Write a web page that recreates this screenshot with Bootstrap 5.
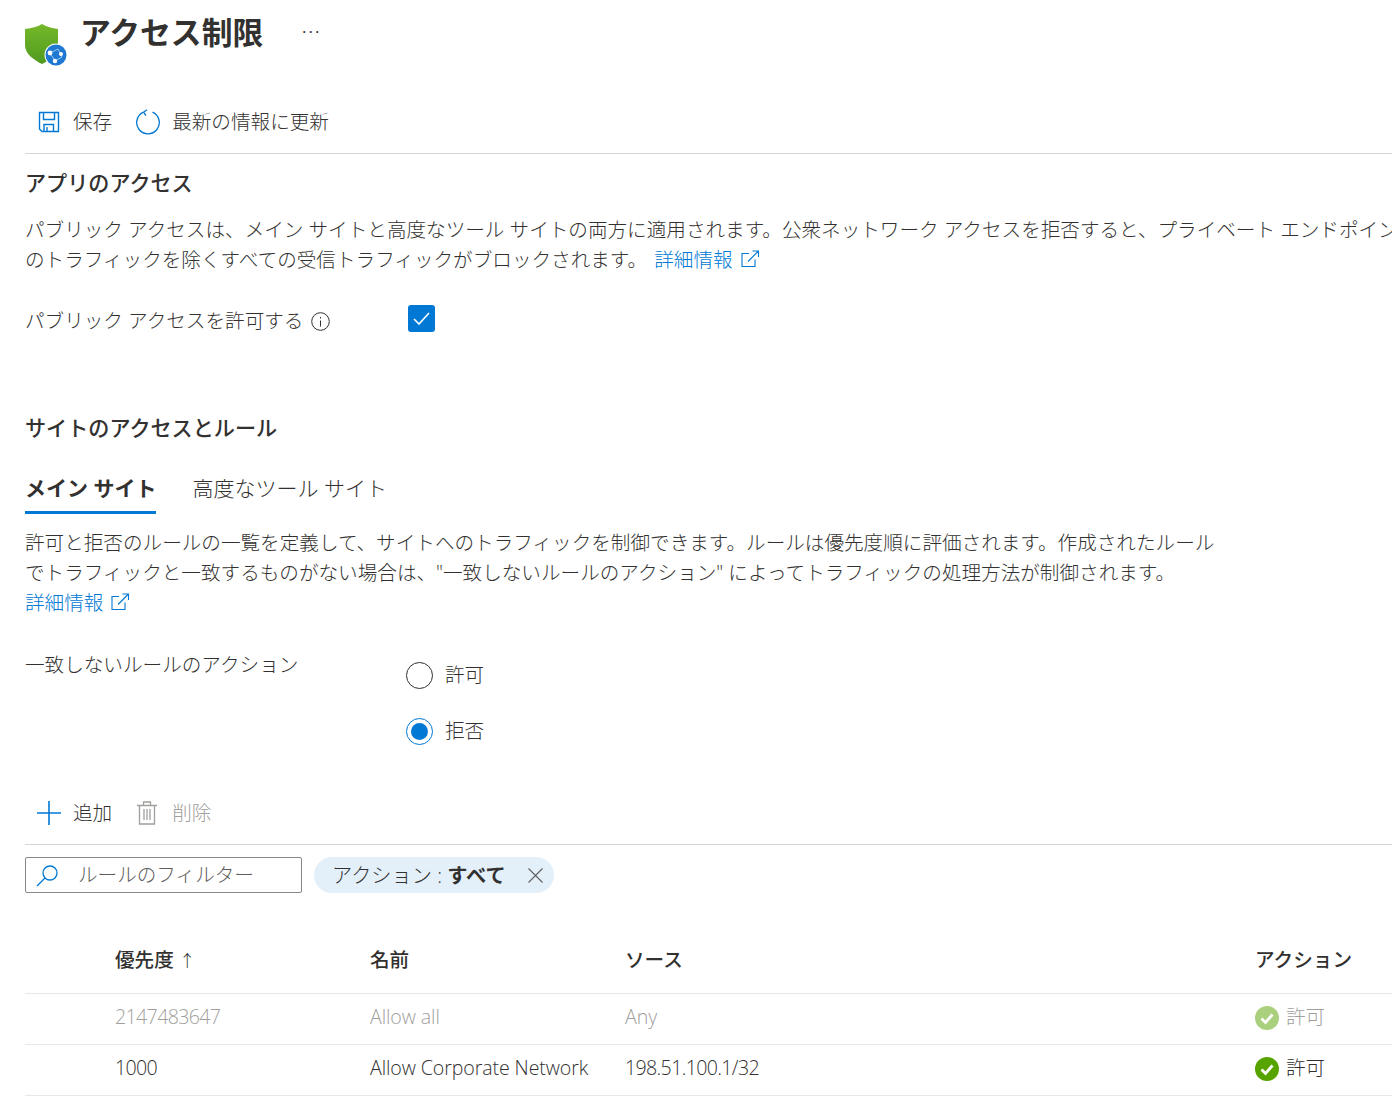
<!DOCTYPE html>
<html lang="ja">
<head>
  <meta charset="UTF-8">
  <title>アクセス制限</title>
  <meta name="viewport" content="width=device-width, initial-scale=1">
  <link href="https://cdn.jsdelivr.net/npm/bootstrap@5.3.3/dist/css/bootstrap.min.css" rel="stylesheet">
  <style>
    html, body { height: 1120px; overflow: hidden; }
    body {
      font-family: "Open Sans", "Noto Sans CJK JP", sans-serif;
      font-size: 19.6px; font-weight: 300; line-height: 30px; color: #323130; background: #fff;
    }
    a { color: #0078d4; text-decoration: none; }
    svg { display: block; flex: none; }
    .pg { padding-left: 25px; width: 1392px; }
    .head-row { height: 100px; }
    .shield-logo { margin-top: 24px; }
    .head-title { font-size: 30.8px; font-weight: 700; line-height: 40px; margin: 12px 0 0 11px; width: 222px; }
    .head-more { font-size: 17px; line-height: 20px; margin-top: 22px; letter-spacing: 2px; font-weight: 400; }
    .cmd-bar { height: 54px; border-bottom: 1px solid #d6d6d6; padding: 0 0 9px 13px; }
    .cmd-bar.add-bar { height: 63px; margin-top: 23px; padding: 0 0 0 12px; }
    .cmd-btn { gap: 12px; margin-right: 24px; }
    .cmd-btn.save-btn { gap: 13px; }
    .cmd-btn.add-btn { margin-right: 25px; }
    .muted-cmd { color: #a19f9d; }
    .muted-cmd svg { margin-right: 3px; }
    .sec-title { font-size: 21.1px; font-weight: 500; line-height: 30px; margin: 14px 0 0; }
    .sec-title.sec-gap { margin-top: 78px; }
    .body-txt { white-space: nowrap; margin: 17px 0 0; }
    .body-txt.rule-txt { margin-top: 14px; }
    .first-link { margin-left: 2px; }
    .ext-icon { display: inline-block; vertical-align: -1px; margin-left: 3px; }
    .field-row { height: 30px; margin-top: 30px; }
    .field-label { width: 383px; padding-top: 2px; }
    .field-label.radio-label { width: 381px; padding-top: 0; }
    .chk-box { width: 27px; height: 27px; border-radius: 3px; background: #0078d4; }
    .tab-strip { gap: 36px; height: 52px; margin-top: 19px; font-size: 21px; }
    .tab-item { height: 52px; line-height: 52px; }
    .tab-on { font-weight: 700; border-bottom: 3px solid #0078d4; }
    .radio-mark { width: 27px; height: 27px; border-radius: 50%; border: 1.5px solid #323130; }
    .radio-on { border-color: #0078d4; display: flex; align-items: center; justify-content: center; }
    .radio-on::after { content: ""; width: 17px; height: 17px; border-radius: 50%; background: #0078d4; }
    .radio-list { margin-top: -3px; }
    .radio-row { height: 56px; gap: 12px; }
    .action-row { margin-top: 32px; }
    .filter-wrap { margin-top: 12px; gap: 12px; }
    .filter-box { width: 277px; height: 36px; border: 1px solid #8a8886; border-radius: 2px; padding-left: 10px; gap: 19px; color: #605e5c; }
    .filter-pill { height: 36px; border-radius: 18px; background: #e3f0fa; padding: 0 10px 0 18px; gap: 21px; font-size: 20.2px; }
    .rule-grid { width: 1367px; margin-top: 34px; }
    .rule-line { height: 51px; border-bottom: 1px solid #e8e8e8; padding-bottom: 3px; }
    .rule-line.rule-top { height: 67px; font-weight: 500; padding-bottom: 0; }
    .rule-line:not(.rule-top) .cell-a, .rule-line:not(.rule-top) .cell-b, .rule-line:not(.rule-top) .cell-c { letter-spacing: -.1px; margin-bottom: 2px; }
    .rule-line:not(.rule-top) .cell-d span { margin-bottom: 2px; }
    .sort-arrow { font-size: 16.5px; font-weight: 300; }
    .cell-a { width: 345px; padding-left: 90px; }
    .cell-b { width: 255px; }
    .cell-c { width: 630px; }
    .cell-d { width: 137px; gap: 7px; }
    .rule-line:not(.rule-top) .num-txt { letter-spacing: -.65px; }
    .dim-line { color: #a19f9d; }
    .dim-line svg { opacity: .5; }
  </style>
</head>
<body>
  <div class="pg">
    <div class="head-row d-flex">
      <svg class="shield-logo" width="44" height="44" viewBox="0 0 44 44">
        <defs><linearGradient id="shieldFill" x1="0" y1="0" x2="0" y2="1"><stop offset="0" stop-color="#76b82a"/><stop offset="1" stop-color="#4f9a1e"/></linearGradient></defs>
        <path d="M0 5 C7 4 12 3 17 0 C22 3 27 4 33 5 V21 C33 30 25 36 17 40 C9 36 0 30 0 21Z" fill="url(#shieldFill)"/>
        <circle cx="31" cy="31" r="11.5" fill="#fff"/>
        <circle cx="31" cy="31" r="10.5" fill="#1f78d1"/>
        <path d="M25 29 L33 25 L37 33 L30 37Z" fill="none" stroke="#9cc8f0" stroke-width="1"/>
        <circle cx="25" cy="29" r="2.4" fill="#fff"/>
        <circle cx="36" cy="30" r="2" fill="#fff"/>
        <circle cx="30" cy="37" r="2.2" fill="#fff"/>
      </svg>
      <h1 class="head-title">アクセス制限</h1>
      <div class="head-more">···</div>
    </div>

    <div class="cmd-bar d-flex align-items-center">
      <div class="cmd-btn save-btn d-flex align-items-center">
        <svg width="22" height="22" viewBox="0 0 22 22" fill="none" stroke="#0078d4" stroke-width="1.4">
          <path d="M1.5 1.5 H20.5 V20.5 H4 L1.5 18Z"/><path d="M5.5 1.5 V8.5 H16.5 V1.5"/><path d="M6 20.5 V13.5 H15.5 V20.5"/><path d="M9 16 V20"/>
        </svg>
        <span>保存</span>
      </div>
      <div class="cmd-btn d-flex align-items-center">
        <svg width="24" height="26" viewBox="0 0 24 26" fill="none" stroke="#0078d4" stroke-width="1.3">
          <path d="M7.5 3.2 A11.3 11.3 0 1 0 16.5 3.2"/><path d="M7.5 3.2 L11 .8 M7.5 3.2 L10 6.5"/>
        </svg>
        <span>最新の情報に更新</span>
      </div>
    </div>

    <h2 class="sec-title">アプリのアクセス</h2>
    <p class="body-txt">パブリック アクセスは、メイン サイトと高度なツール サイトの両方に適用されます。公衆ネットワーク アクセスを拒否すると、プライベート エンドポイント<br>のトラフィックを除くすべての受信トラフィックがブロックされます。 <a class="first-link" href="#">詳細情報
      <svg class="ext-icon" width="19" height="18" viewBox="0 0 19 18" fill="none" stroke="#0078d4" stroke-width="1.1"><path d="M8 3.5 H1 V16.5 H14 V9.5"/><path d="M7 11.5 L17.5 1 M11.5 1 H17.5 V7"/></svg></a></p>

    <div class="field-row d-flex">
      <div class="field-label d-flex align-items-center gap-2">
        <span>パブリック アクセスを許可する</span>
        <svg width="19" height="19" viewBox="0 0 19 19" fill="none" stroke="#323130" stroke-width="1"><circle cx="9.5" cy="9.5" r="8.8"/><path d="M9.5 8.5 V14.5 M9.5 5 V6.5"/></svg>
      </div>
      <div class="chk-box d-flex align-items-center justify-content-center">
        <svg width="17" height="13" viewBox="0 0 17 13" fill="none" stroke="#fff" stroke-width="1.6"><path d="M1 7 L6 12 L16 1"/></svg>
      </div>
    </div>

    <h2 class="sec-title sec-gap">サイトのアクセスとルール</h2>

    <div class="tab-strip d-flex">
      <div class="tab-item tab-on">メイン サイト</div>
      <div class="tab-item">高度なツール サイト</div>
    </div>

    <p class="body-txt rule-txt">許可と拒否のルールの一覧を定義して、サイトへのトラフィックを制御できます。ルールは優先度順に評価されます。作成されたルール<br>でトラフィックと一致するものがない場合は、"一致しないルールのアクション" によってトラフィックの処理方法が制御されます。<br><a href="#">詳細情報
      <svg class="ext-icon" width="19" height="18" viewBox="0 0 19 18" fill="none" stroke="#0078d4" stroke-width="1.1"><path d="M8 3.5 H1 V16.5 H14 V9.5"/><path d="M7 11.5 L17.5 1 M11.5 1 H17.5 V7"/></svg></a></p>

    <div class="action-row d-flex">
      <div class="field-label radio-label">一致しないルールのアクション</div>
      <div class="radio-list">
        <div class="radio-row d-flex align-items-center"><div class="radio-mark"></div><span>許可</span></div>
        <div class="radio-row d-flex align-items-center"><div class="radio-mark radio-on"></div><span>拒否</span></div>
      </div>
    </div>

    <div class="cmd-bar add-bar d-flex align-items-center">
      <div class="cmd-btn add-btn d-flex align-items-center">
        <svg width="24" height="24" viewBox="0 0 24 24" stroke="#0078d4" stroke-width="1.6"><path d="M12 0 V24 M0 12 H24"/></svg>
        <span>追加</span>
      </div>
      <div class="cmd-btn muted-cmd d-flex align-items-center">
        <svg width="20" height="24" viewBox="0 0 20 24" fill="none" stroke="#a19f9d" stroke-width="1.3"><path d="M0 4.5 H20 M6.5 4.5 V1 H13.5 V4.5 M2.5 4.5 V23 H17.5 V4.5 M7 8 V19 M10 8 V19 M13 8 V19"/></svg>
        <span>削除</span>
      </div>
    </div>

    <div class="d-flex align-items-center filter-wrap">
      <div class="filter-box d-flex align-items-center">
        <svg width="23" height="23" viewBox="0 0 23 23" fill="none" stroke="#0078d4" stroke-width="1.3"><circle cx="14" cy="9" r="7"/><path d="M9 14 L1 22"/></svg>
        <span>ルールのフィルター</span>
      </div>
      <div class="filter-pill d-flex align-items-center">
        <span>アクション : <b class="fw-bold">すべて</b></span>
        <svg width="17" height="17" viewBox="0 0 17 17" stroke="#605e5c" stroke-width="1.1"><path d="M1.5 1.5 L15.5 15.5 M15.5 1.5 L1.5 15.5"/></svg>
      </div>
    </div>

    <div class="rule-grid">
      <div class="rule-line rule-top d-flex align-items-center">
        <div class="cell-a">優先度 <span class="sort-arrow">↑</span></div><div class="cell-b">名前</div><div class="cell-c">ソース</div><div class="cell-d">アクション</div>
      </div>
      <div class="rule-line dim-line d-flex align-items-center">
        <div class="cell-a num-txt">2147483647</div><div class="cell-b">Allow all</div><div class="cell-c">Any</div>
        <div class="cell-d d-flex align-items-center">
          <svg width="24" height="24" viewBox="0 0 24 24"><circle cx="12" cy="12" r="12" fill="#57a300"/><path d="M6.5 12.5 L10.5 16.5 L17.5 8.5" fill="none" stroke="#fff" stroke-width="2.8"/></svg>
          <span>許可</span>
        </div>
      </div>
      <div class="rule-line d-flex align-items-center">
        <div class="cell-a num-txt">1000</div><div class="cell-b">Allow Corporate Network</div><div class="cell-c num-txt">198.51.100.1/32</div>
        <div class="cell-d d-flex align-items-center">
          <svg width="24" height="24" viewBox="0 0 24 24"><circle cx="12" cy="12" r="12" fill="#57a300"/><path d="M6.5 12.5 L10.5 16.5 L17.5 8.5" fill="none" stroke="#fff" stroke-width="2.8"/></svg>
          <span>許可</span>
        </div>
      </div>
    </div>
  </div>
  <script src="https://cdn.jsdelivr.net/npm/bootstrap@5.3.3/dist/js/bootstrap.bundle.min.js"></script>
</body>
</html>
